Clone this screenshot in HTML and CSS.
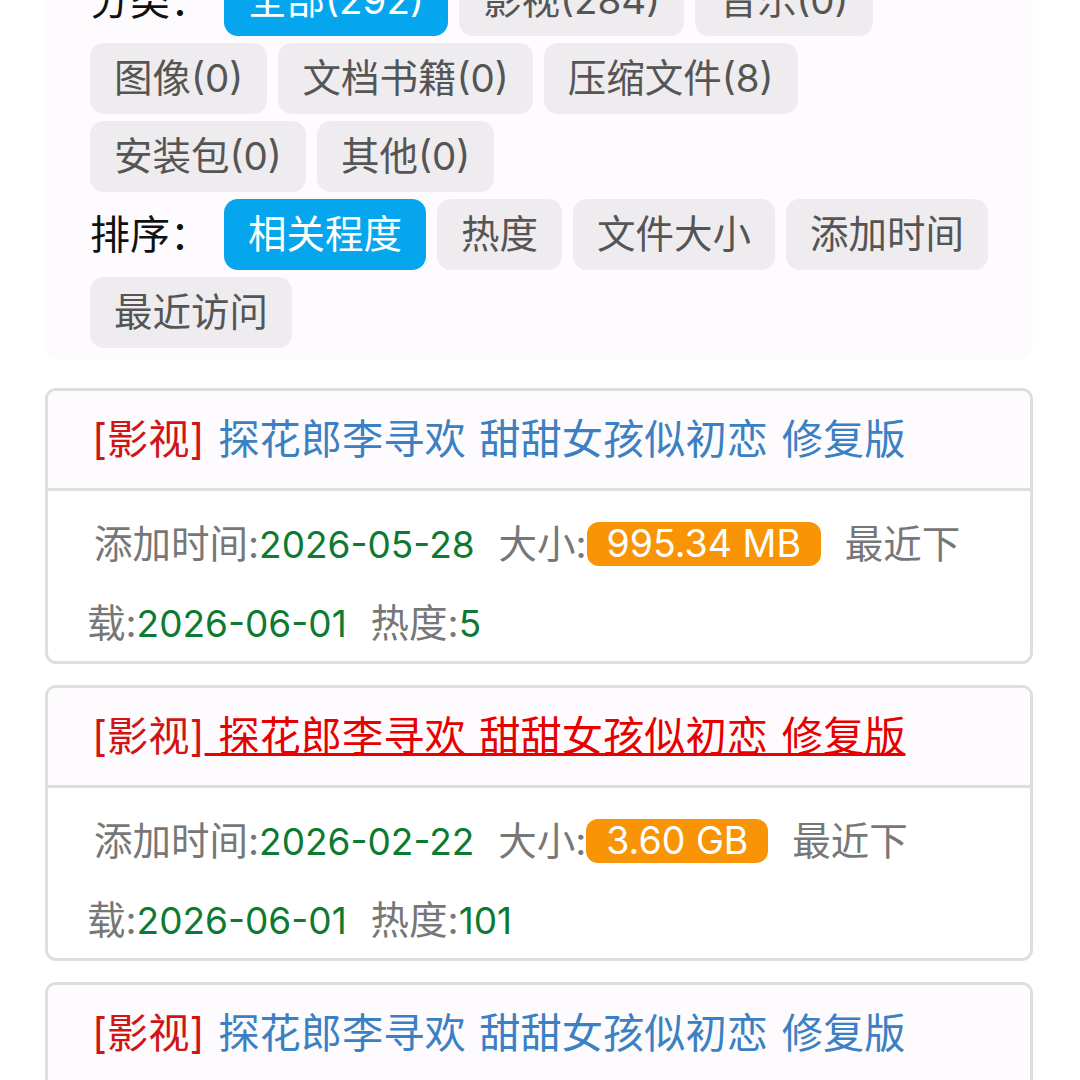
FILE: index.html
```html
<!DOCTYPE html>
<html lang="zh">
<head>
<meta charset="utf-8">
<title>搜索结果</title>
<link rel="stylesheet" href="styles.css">
</head>
<body>
<div class="page">
  <div class="filter">
    <div class="row">
      <span class="label">分类：</span>
      <a class="btn active">全部(292)</a>
      <a class="btn">影视(284)</a>
      <a class="btn">音乐(0)</a>
      <a class="btn">图像(0)</a>
      <a class="btn">文档书籍(0)</a>
      <a class="btn">压缩文件(8)</a>
      <a class="btn">安装包(0)</a>
      <a class="btn">其他(0)</a>
    </div>
    <div class="row">
      <span class="label">排序：</span>
      <a class="btn active">相关程度</a>
      <a class="btn">热度</a>
      <a class="btn">文件大小</a>
      <a class="btn">添加时间</a>
      <a class="btn">最近访问</a>
    </div>
  </div>

  <div class="card">
    <div class="head"><span class="cat">[影视]</span><a class="title"> 探花郎李寻欢 甜甜女孩似初恋 修复版</a></div>
    <div class="meta">
      <span class="item">添加时间:<span class="val">2026-05-28</span></span>
      <span class="item">大小:<span class="badge">995.34 MB</span></span>
      <span class="item">最近下<br>载:<span class="val">2026-06-01</span></span>
      <span class="item">热度:<span class="val">5</span></span>
    </div>
  </div>

  <div class="card">
    <div class="head"><span class="cat">[影视]</span><a class="title visited"> 探花郎李寻欢 甜甜女孩似初恋 修复版</a></div>
    <div class="meta">
      <span class="item">添加时间:<span class="val">2026-02-22</span></span>
      <span class="item">大小:<span class="badge">3.60 GB</span></span>
      <span class="item">最近下<br>载:<span class="val">2026-06-01</span></span>
      <span class="item">热度:<span class="val">101</span></span>
    </div>
  </div>

  <div class="card">
    <div class="head"><span class="cat">[影视]</span><a class="title"> 探花郎李寻欢 甜甜女孩似初恋 修复版</a></div>
    <div class="meta">
      <span class="item">添加时间:<span class="val">2026-01-15</span></span>
      <span class="item">大小:<span class="badge">1.20 GB</span></span>
      <span class="item">最近下<br>载:<span class="val">2026-06-01</span></span>
      <span class="item">热度:<span class="val">12</span></span>
    </div>
  </div>
</div>
</body>
</html>
```

FILE: styles.css
```css
html, body {
  margin: 0;
  padding: 0;
  background: #ffffff;
}

body {
  font-family: Inter, "Noto Sans CJK SC", sans-serif;
  overflow: hidden;
}

.page {
  padding: 0 47px 0 45px;
}

.filter {
  margin-top: -49px;
  background: #fdfbfd;
  border-radius: 14px;
  padding: 14px 42px 12px 45px;
  display: flex;
  flex-direction: column;
  gap: 7px;
}

.row {
  display: flex;
  flex-wrap: wrap;
  align-items: center;
  gap: 7px 11px;
}

.label {
  width: 123px;
  font-size: 40px;
  line-height: 71px;
  color: #111111;
}

.btn {
  display: block;
  height: 71px;
  line-height: 71px;
  padding: 0 24px;
  border-radius: 14px;
  background: #eeecee;
  color: #555555;
  font-size: 38.5px;
  white-space: nowrap;
}

.btn.active {
  background: #06a6ee;
  color: #ffffff;
}

.card {
  margin-top: 28px;
  border: 3px solid #dedede;
  border-radius: 11px;
  overflow: hidden;
  background: #ffffff;
}

.card + .card {
  margin-top: 21px;
}

.head {
  background: #fdfbfd;
  padding: 19px 44px;
  border-bottom: 3px solid #dedede;
  font-size: 41.25px;
  line-height: 59px;
  white-space: nowrap;
  word-spacing: 2px;
}

.cat {
  color: #cf1515;
}

.title {
  color: #3b80c3;
  text-decoration: none;
}

.title.visited {
  color: #e60000;
  text-decoration: underline;
  text-decoration-thickness: 3px;
}

.meta {
  padding: 14px 39px 0 39px;
  font-size: 38.5px;
  line-height: 78px;
  color: #777777;
  height: 156px;
}

.item {
  margin: 0 6px 0 7px;
}

.val {
  font-size: 37px;
  color: #0d7a31;
}

.badge {
  display: inline-block;
  line-height: 44px;
  padding: 0 20px;
  border-radius: 12px;
  background: #f89406;
  color: #ffffff;
  font-size: 37.5px;
  vertical-align: 1px;
}
```
